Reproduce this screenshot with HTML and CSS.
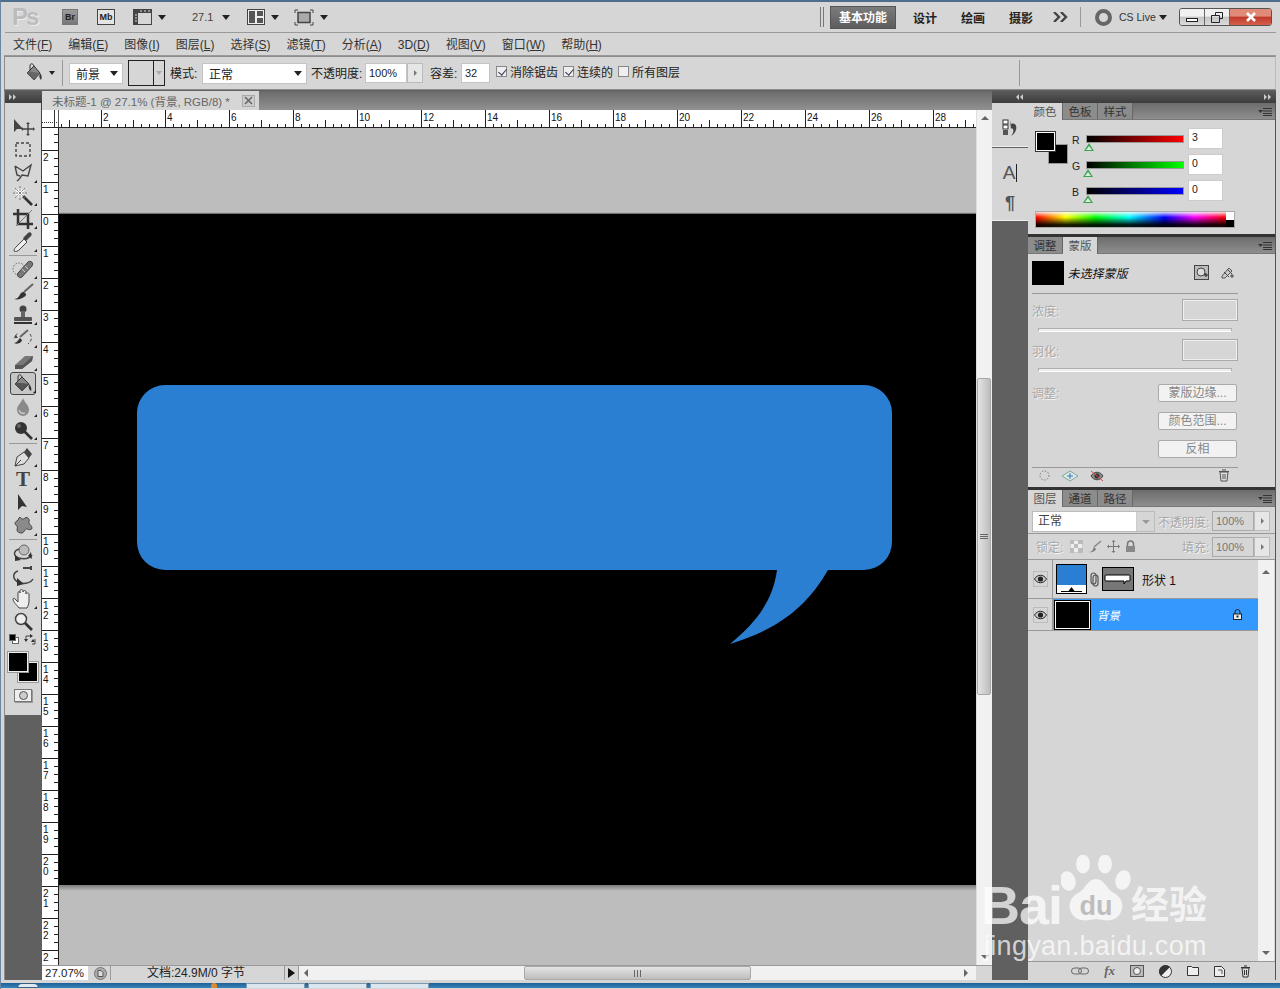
FILE: index.html
```html
<!DOCTYPE html>
<html>
<head>
    <meta charset="utf-8">
    <title>Adobe Photoshop CS5</title>
    <link rel="stylesheet" href="styles.css">
</head>
<body>
<div class="window">

    <!-- application bar -->
    <header class="appbar">
        <span class="ps-logo">Ps</span>
        <span class="br-btn">Br</span>
        <span class="mb-btn">Mb</span>
        <svg class="bar-ic film" width="19" height="16" viewBox="0 0 19 16"><rect x=".5" y=".5" width="18" height="15" fill="#d6d6d6" stroke="#444"/><rect x="1" y="1" width="17" height="3" fill="#444"/><rect x="1" y="1" width="4" height="14" fill="#444"/><path d="M2 6h2M2 9h2M2 12h2M7 2h2M11 2h2M15 2h2" stroke="#ddd"/></svg>
        <i class="caret film-caret"></i>
        <span class="zoom-val">27.1</span>
        <i class="caret zoom-caret"></i>
        <svg class="bar-ic layout" width="18" height="16" viewBox="0 0 18 16"><rect x=".5" y=".5" width="17" height="15" fill="#eee" stroke="#444"/><rect x="2" y="2" width="6" height="12" fill="#555"/><rect x="10" y="2" width="6" height="5" fill="#555"/><rect x="10" y="9" width="6" height="5" fill="#555"/></svg>
        <i class="caret layout-caret"></i>
        <svg class="bar-ic screen" width="20" height="17" viewBox="0 0 20 17"><path d="M1 4V1h3M16 1h3v3M19 13v3h-3M4 16H1v-3" fill="none" stroke="#444"/><rect x="4" y="3.5" width="12" height="10" fill="#aaa" stroke="#444" stroke-width="1.5"/></svg>
        <i class="caret screen-caret"></i>

        <span class="bar-grip"></span>
        <span class="ws-btn ws-active">基本功能</span>
        <span class="ws-btn">设计</span>
        <span class="ws-btn">绘画</span>
        <span class="ws-btn">摄影</span>
        <svg class="ws-more" width="15" height="10" viewBox="0 0 15 10"><path d="M1 0l5 5-5 5M8 0l5 5-5 5" fill="none" stroke="#444" stroke-width="2.4"/></svg>
        <span class="bar-sep"></span>
        <span class="cs-ring"></span>
        <span class="cs-live">CS Live</span>
        <i class="caret cs-caret"></i>
        <div class="win-btns">
            <span class="win-btn win-min"><i></i></span>
            <span class="win-btn win-max"><svg width="12" height="11" viewBox="0 0 12 11"><path d="M4.500 3V.5h7v6H8.500M.5 3.500h8v7h-8z" fill="none" stroke="#222"/></svg></span>
            <span class="win-btn win-close"><svg width="12" height="10" viewBox="0 0 12 10"><path d="M2 1l8 8M10 1l-8 8" stroke="#fff" stroke-width="2.600"/></svg></span>
        </div>
    </header>

    <!-- menu bar -->
    <nav class="menubar">
        <span>文件(<u>F</u>)</span>
        <span>编辑(<u>E</u>)</span>
        <span>图像(<u>I</u>)</span>
        <span>图层(<u>L</u>)</span>
        <span>选择(<u>S</u>)</span>
        <span>滤镜(<u>T</u>)</span>
        <span>分析(<u>A</u>)</span>
        <span>3D(<u>D</u>)</span>
        <span>视图(<u>V</u>)</span>
        <span>窗口(<u>W</u>)</span>
        <span>帮助(<u>H</u>)</span>
    </nav>

    <!-- options bar -->
    <div class="optbar">
        <span class="opt-grip"></span>
        <svg class="opt-tool" width="22" height="22" viewBox="0 0 22 22"><path d="M5 11l7-7 6 7-6 7z" fill="#888" stroke="#333"/><path d="M5 11c1-2 3-2 6-1l7 1-6 7z" fill="#666"/><path d="M12 4C11 1 8 1 8 4v4" fill="none" stroke="#333"/><path d="M18 11c2 2 2 5 1 7-2-2-2-4-1-7z" fill="#333"/></svg>
        <i class="caret opt-tool-caret"></i>
        <span class="opt-sep"></span>
        <span class="opt-select sel-source">前景<i class="caret"></i></span>
        <span class="pattern-box"><span class="pattern-swatch"></span><span class="pattern-arrow"><i class="caret"></i></span></span>
        <span class="opt-label lb-mode">模式:</span>
        <span class="opt-select sel-mode">正常<i class="caret"></i></span>
        <span class="opt-label lb-opacity">不透明度:</span>
        <span class="opt-input in-opacity">100%</span>
        <span class="opt-step"><i></i></span>
        <span class="opt-label lb-tol">容差:</span>
        <span class="opt-input in-tol">32</span>
        <label class="opt-check ck-anti"><i class="check on"></i>消除锯齿</label>
        <label class="opt-check ck-cont"><i class="check on"></i>连续的</label>
        <label class="opt-check ck-all"><i class="check"></i>所有图层</label>
        <span class="opt-sep opt-sep-end"></span>
    </div>

    <div class="main">

        <!-- tools -->
        <aside class="toolcol">
            <div class="strip"><svg width="8" height="6" viewBox="0 0 8 6"><path d="M0 0l3 3-3 3zM4 0l3 3-3 3z" fill="#ccc"/></svg></div>
            <div class="tools">
                <div class="grip"></div>
                <div class="tool"><svg viewBox="0 0 24 22"><path class="d" d="M3 3v13l3-3h6z"/><path class="s" d="M17 8v10M12 13h10"/><path class="d" d="M17 6l2 2h-4zM17 20l2-2h-4zM10 13l2-2v4zM24 13l-2-2v4z"/></svg></div>
                <div class="tool"><svg viewBox="0 0 24 22"><rect class="dash" x="5" y="4" width="14" height="13"/></svg></div>
                <div class="tool more"><svg viewBox="0 0 24 22"><path class="s" d="M4 4l8 5 8-6-3 11-6-1-2 3c-1 2-2 2-3 3M4 4l2 9 3 1"/></svg></div>
                <div class="tool more"><svg viewBox="0 0 24 22"><path class="thick" d="M12 11l9 9"/><circle cx="9" cy="8" r="4" fill="#fff"/><path d="M9 1v14M2 8h14M4 3l10 10M14 3L4 13" stroke="#777" stroke-dasharray="2 1"/></svg></div>
                <div class="tool more"><svg viewBox="0 0 24 22"><path d="M7 1v15h15M2 6h15v15" fill="none" stroke="#333" stroke-width="2.5"/><path d="M5 18L21 2" stroke="#777"/></svg></div>
                <div class="tool more"><svg viewBox="0 0 24 22"><path d="M3 20c0-2 1-3 2-4l8-8 3 3-8 8c-1 1-3 2-5 1z" fill="#eee" stroke="#444"/><path d="M12 7l5-5c2-2 5 1 3 3l-5 5z" fill="#444"/></svg></div>
                <div class="sep"></div>
                <div class="tool more"><svg viewBox="0 0 24 22"><circle cx="8" cy="11" r="6" fill="none" stroke="#666" stroke-dasharray="1.5 1.5"/><path d="M7 15L17 4c3-2 6 1 4 4L11 19c-2 2-6-1-4-4z" fill="#777" stroke="#444"/><path d="M11 11l3 3M14 8l3 3" stroke="#ccc"/></svg></div>
                <div class="tool more"><svg viewBox="0 0 24 22"><path d="M22 3L13 11" stroke="#666" stroke-width="2"/><path d="M3 18c4 0 5-3 7-6 1-1 2-1 3-1l2 2c0 1 0 2-2 3-3 2-6 3-10 2z" fill="#333"/></svg></div>
                <div class="tool more"><svg viewBox="0 0 24 22"><circle cx="12" cy="5" r="3.5" fill="#444"/><rect x="10" y="7" width="4" height="7" fill="#666"/><rect x="3" y="13" width="18" height="4" rx="1" fill="#555"/><rect x="3" y="18" width="18" height="2" fill="#333"/></svg></div>
                <div class="tool more"><svg viewBox="0 0 24 22"><path d="M17 3L9 10" stroke="#666" stroke-width="2"/><path d="M3 16c3 0 4-3 6-5l2 2c0 2-4 5-8 3z" fill="#333"/><path d="M3 12c0-3 2-5 4-6M4 11l1-3 2 3z" fill="#444"/><path class="dash thin" d="M19 7c2 3 2 7-2 10"/></svg></div>
                <div class="tool more"><svg viewBox="0 0 24 22"><path d="M4 15L14 6h8l-1 5-10 8H4z" fill="#777"/><path d="M4 15h8l10-9-1 5-10 8H4z" fill="#555"/></svg></div>
                <div class="tool tool-on more"><svg viewBox="0 0 24 22"><path d="M4 11l7-7 7 7-7 7z" fill="#888" stroke="#333"/><path d="M4 11c2-2 4-1 7-1l7 1-7 7z" fill="#555"/><path d="M11 4c-1-3-4-3-4 0v4" fill="none" stroke="#333"/><path d="M18 11c2 2 3 5 2 7-2-1-3-4-2-7z" fill="#333"/></svg></div>
                <div class="tool more"><svg viewBox="0 0 24 22"><path d="M12 2c1 4 6 7 6 12a6 6 0 0 1-12 0c0-5 5-8 6-12z" fill="#8a8a8a"/><path d="M8 14c1 3 3 4 6 3" fill="none" stroke="#c4c4c4" stroke-width="1.5"/></svg></div>
                <div class="tool more"><svg viewBox="0 0 24 22"><path class="thick" d="M13 12l8 8"/><circle cx="10" cy="9" r="6" fill="#333"/><circle cx="8" cy="7" r="2" fill="#666"/></svg></div>
                <div class="sep"></div>
                <div class="tool more"><svg viewBox="0 0 24 22"><path d="M4 20l2-9 7-5 5 6-5 6z" fill="#ddd" stroke="#444"/><path d="M4 20l6-6" stroke="#444"/><path d="M13 6l3-4 5 6-3 4z" fill="#444"/></svg></div>
                <div class="tool more"><span class="type-tool">T</span></div>
                <div class="tool more"><svg viewBox="0 0 24 22"><path d="M7 2v16l4-4 5 1z" fill="#333"/></svg></div>
                <div class="tool more"><svg viewBox="0 0 24 22"><path d="M9 2c2 2 3 3 5 1 3-2 5 2 4 4-1 1 3 4 3 6s-3 2-5 1c-2-1-2 3-5 4-3 0-5-1-5-3 0-1 1-3 0-4-2-1-3-4 0-5 2-1 1-3 3-4z" fill="#8a8a8a" stroke="#444"/></svg></div>
                <div class="sep"></div>
                <div class="tool"><svg viewBox="0 0 24 22"><circle cx="13" cy="8" r="5" fill="#bbb" stroke="#666"/><path d="M8 7C2 9 2 14 8 16c4 1 10 1 13-3" fill="none" stroke="#444" stroke-width="1.5"/><path d="M21 17l-1-7-3 4z" fill="#333"/><path d="M4 13l6 5-6 1z" fill="#333"/></svg></div>
                <div class="tool"><svg viewBox="0 0 24 22"><path d="M7 6C1 8 1 15 9 18c5 1 11 0 13-4" fill="none" stroke="#444" stroke-width="1.5"/><path d="M6 13l7 6-7 2z" fill="#333"/><path d="M12 3h8M20 1v4" stroke="#444" stroke-width="2"/></svg></div>
                <div class="tool more"><svg viewBox="0 0 24 22"><path d="M8 20c-2-3-6-6-6-9 0-1 2-1 3 1l2 2V5c0-2 2-2 2 0V3c0-2 3-2 3 0v1c0-2 3-2 3 0v2c0-2 3-1 3 0v7c0 3-1 5-2 7z" fill="#eee" stroke="#444"/></svg></div>
                <div class="tool"><svg viewBox="0 0 24 22"><circle cx="10" cy="8" r="5.5" fill="#eee" stroke="#444" stroke-width="1.5"/><path class="thick" d="M14 12l7 7"/></svg></div>
                <div class="mini-colors">
                    <svg width="10" height="10" viewBox="0 0 10 10"><rect x="3.5" y="3.5" width="6" height="6" fill="#fff" stroke="#666"/><rect x=".5" y=".5" width="6" height="6" fill="#000" stroke="#666"/></svg>
                    <svg width="12" height="11" viewBox="0 0 12 11"><path d="M2 5V2h6M8 10h3V5" fill="none" stroke="#444"/><path d="M0 5h4L2 8zM6 0v4L9 2zM9 5l2 3H7z" fill="#333"/></svg>
                </div>
                <div class="swatches">
                    <span class="sw sw-bg"></span>
                    <span class="sw sw-fg"></span>
                </div>
                <div class="quickmask"><i></i></div>
            </div>
        </aside>

        <!-- document -->
        <section class="doccol">
            <div class="tabrow">
                <div class="doctab">未标题-1 @ 27.1% (背景, RGB/8) *<span class="tab-x"><svg width="9" height="9" viewBox="0 0 9 9"><path d="M1 1l7 7M8 1L1 8" stroke="#666" stroke-width="1.5"/></svg></span></div>
            </div>
            <div class="docbody">
                <div class="docview">
                    <div class="hruler">
                        <div class="ruler-corner"></div>
                        <div class="hticks">
                            <span class="first"></span><span>2</span><span>4</span><span>6</span><span>8</span><span>10</span><span>12</span><span>14</span><span>16</span><span>18</span><span>20</span><span>22</span><span>24</span><span>26</span><span>28</span>
                        </div>
                    </div>
                    <div class="viewrow">
                        <div class="vticks">
                            <span class="first"></span><span>2</span><span>1</span><span>0</span><span>1</span><span>2</span><span>3</span><span>4</span><span>5</span><span>6</span><span>7</span><span>8</span><span>9</span><span>1<br>0</span><span>1<br>1</span><span>1<br>2</span><span>1<br>3</span><span>1<br>4</span><span>1<br>5</span><span>1<br>6</span><span>1<br>7</span><span>1<br>8</span><span>1<br>9</span><span>2<br>0</span><span>2<br>1</span><span>2<br>2</span><span>2</span>
                        </div>
                        <div class="canvas">
                            <div class="paste-top"></div>
                            <div class="art">
                                <svg class="bubble" width="756" height="259" viewBox="0 0 756 259"><path fill="#2a7fd2" d="M28 0H727A28 28 0 0 1 755 28V157A28 28 0 0 1 727 185H691C670 222 640 245 593 259C620 237 636 215 640 185H28A28 28 0 0 1 0 157V28A28 28 0 0 1 28 0Z"/></svg>
                            </div>
                            <div class="paste-bottom"></div>
                        </div>
                    </div>
                </div>
                <div class="vscroll">
                    <i class="arrow-up"></i>
                    <div class="vthumb-wrap"><div class="vthumb"><b></b></div></div>
                    <i class="arrow-down"></i>
                </div>
            </div>
            <div class="statusbar">
                <span class="st-zoom">27.07%</span>
                <span class="st-icon"><svg width="13" height="13" viewBox="0 0 13 13"><circle cx="6.5" cy="6.5" r="6" fill="#aaa" stroke="#777"/><path d="M4 3.500h3l2 2v4H4z" fill="#ddd" stroke="#555"/></svg></span>
                <span class="st-info">文档:24.9M/0 字节</span>
                <span class="st-play"><i></i></span>
                <div class="hscroll">
                    <i class="arrow-left"></i>
                    <div class="hthumb"><b></b></div>
                    <i class="arrow-right"></i>
                </div>
                <span class="st-end"></span>
            </div>
        </section>

        <!-- right side -->
        <div class="rightcol">
            <div class="strip strip-right">
                <svg width="8" height="6" viewBox="0 0 8 6"><path d="M3 0L0 3l3 3zM7 0L4 3l3 3z" fill="#ccc"/></svg>
                <svg width="8" height="6" viewBox="0 0 8 6"><path d="M0 0l3 3-3 3zM4 0l3 3-3 3z" fill="#ccc"/></svg>
            </div>
            <div class="rightbody">
                <div class="dock">
                    <div class="dock-box dock-hist">
                        <div class="grip grip-small"></div>
                        <svg width="16" height="18" viewBox="0 0 16 18"><rect x="1" y="1" width="5" height="4" fill="#fff" stroke="#333"/><rect x="1" y="6" width="5" height="4" fill="#fff" stroke="#333"/><rect x="1" y="11" width="5" height="5" fill="#555"/><path d="M8 1l1 4c5-2 6 3 5 6s-3 5-5 6c2-2 3-5 2-7-1-1-2-1-2 0z" fill="#444"/></svg>
                    </div>
                    <div class="dock-box dock-char">
                        <div class="grip grip-small"></div>
                        <span class="dock-a">A</span>
                        <span class="dock-p">¶</span>
                    </div>
                </div>

                <div class="panels">
                    <!-- color -->
                    <div class="panel panel-color">
                        <div class="tabs">
                            <span class="tab active">颜色</span><span class="tab">色板</span><span class="tab">样式</span>
                            <svg class="panel-menu" width="14" height="8" viewBox="0 0 14 8"><path d="M0 2h5L2.500 5z" fill="#333"/><path d="M5 .5h9M5 3h9M5 5.500h9M5 7.500h9" stroke="#333"/></svg>
                        </div>
                        <div class="color-body">
                            <span class="cs cs-bg"></span>
                            <span class="cs cs-fg"></span>
                            <div class="color-rows">
                                <span class="ch-label">R</span>
                                <span class="track track-r"><i class="thumb thumb-r"></i></span>
                                <span class="value">3</span>
                                <span class="ch-label">G</span>
                                <span class="track track-g"><i class="thumb"></i></span>
                                <span class="value">0</span>
                                <span class="ch-label">B</span>
                                <span class="track track-b"><i class="thumb"></i></span>
                                <span class="value">0</span>
                            </div>
                            <div class="spectrum"><span class="spec-end"></span></div>
                        </div>
                    </div>
                    <div class="panel-gap"></div>

                    <!-- masks -->
                    <div class="panel panel-mask">
                        <div class="tabs">
                            <span class="tab">调整</span><span class="tab active">蒙版</span>
                            <svg class="panel-menu" width="14" height="8" viewBox="0 0 14 8"><path d="M0 2h5L2.500 5z" fill="#333"/><path d="M5 .5h9M5 3h9M5 5.500h9M5 7.500h9" stroke="#333"/></svg>
                        </div>
                        <div class="mask-body">
                            <div class="mask-head">
                                <span class="mask-thumb"></span>
                                <em class="mask-name">未选择蒙版</em>
                                <svg class="mask-ic1" width="15" height="15" viewBox="0 0 15 15"><rect x=".5" y=".5" width="14" height="14" fill="#bbb" stroke="#444"/><circle cx="7" cy="7" r="4" fill="#ddd" stroke="#444"/><path d="M10 10h4M12 8v4" stroke="#222"/></svg>
                                <svg class="mask-ic2" width="15" height="15" viewBox="0 0 15 15"><path d="M2 11L9 3l3 3-7 7H2z" fill="#ccc" stroke="#555"/><path d="M4 7l5 5M7 4l5 5M10 11h4M12 9v4" stroke="#444"/></svg>
                            </div>
                            <div class="mask-row">
                                <span class="dim">浓度:</span>
                                <span class="dim-input"></span>
                            </div>
                            <div class="dim-track"></div>
                            <div class="mask-row">
                                <span class="dim">羽化:</span>
                                <span class="dim-input"></span>
                            </div>
                            <div class="dim-track"></div>
                            <div class="mask-actions">
                                <span class="dim dim-adjust">调整:</span>
                                <div class="mask-btns">
                                    <span class="mask-btn">蒙版边缘...</span>
                                    <span class="mask-btn">颜色范围...</span>
                                    <span class="mask-btn">反相</span>
                                </div>
                            </div>
                            <div class="mask-foot">
                                <svg class="mf1" width="11" height="11" viewBox="0 0 11 11"><circle cx="5.5" cy="5.5" r="4.5" fill="none" stroke="#777" stroke-dasharray="1.5 1.5"/></svg>
                                <svg class="mf2" width="18" height="12" viewBox="0 0 18 12"><path d="M9 1l8 5-8 5-8-5z" fill="#dfe8e4" stroke="#7ea79a"/><path d="M9 3v6M6 6h6" stroke="#2b78b0"/></svg>
                                <svg class="mf3" width="14" height="12" viewBox="0 0 14 12"><path d="M1 6c3-5 9-5 12 0-3 5-9 5-12 0z" fill="#888" stroke="#444"/><circle cx="7" cy="6" r="2.500" fill="#333"/><path d="M1 1l12 10" stroke="#d84444"/></svg>
                                <svg class="mf4" width="12" height="13" viewBox="0 0 12 13"><path d="M2 3h8l-1 9H3z" fill="#ddd" stroke="#555"/><path d="M1 2.500h10M4 1h4M5 5v5M7 5v5" stroke="#555"/></svg>
                            </div>
                        </div>
                    </div>
                    <div class="panel-gap"></div>

                    <!-- layers -->
                    <div class="panel panel-layers">
                        <div class="tabs">
                            <span class="tab active">图层</span><span class="tab">通道</span><span class="tab">路径</span>
                            <svg class="panel-menu" width="14" height="8" viewBox="0 0 14 8"><path d="M0 2h5L2.500 5z" fill="#333"/><path d="M5 .5h9M5 3h9M5 5.500h9M5 7.500h9" stroke="#333"/></svg>
                        </div>
                        <div class="layer-top">
                            <span class="blend">正常<span class="blend-arrow"></span></span>
                            <span class="dim lb-op">不透明度:</span>
                            <span class="dim-val">100%</span><span class="dim-step"><i></i></span>
                        </div>
                        <div class="layer-lock">
                            <span class="dim lb-lock">锁定:</span>
                            <svg width="13" height="13" viewBox="0 0 13 13"><rect width="13" height="13" fill="#eee" stroke="#aaa"/><path d="M0 0h4v4H0zM8 0h5v4H8zM4 4h4v4H4zM0 8h4v5H0zM8 8h5v5H8z" fill="#bbb"/></svg>
                            <svg width="14" height="13" viewBox="0 0 14 13"><path d="M13 1L6 7" stroke="#888" stroke-width="1.5"/><path d="M1 12c3 0 4-2 5-5l2 2c-1 2-4 4-7 3z" fill="#777"/></svg>
                            <svg width="13" height="13" viewBox="0 0 13 13"><path d="M6.500 1v11M1 6.500h11" stroke="#777"/><path d="M6.500 0l2 2h-4zM6.500 13l2-2h-4zM0 6.500l2-2v4zM13 6.500l-2-2v4z" fill="#777"/></svg>
                            <svg width="11" height="13" viewBox="0 0 11 13"><path d="M2.500 6V4a3 3 0 0 1 6 0v2" fill="none" stroke="#777" stroke-width="1.5"/><rect x="1" y="6" width="9" height="6" fill="#888"/></svg>
                            <span class="dim lb-fill">填充:</span>
                            <span class="dim-val">100%</span><span class="dim-step"><i></i></span>
                        </div>
                        <div class="layer-area">
                            <div class="layer-list">
                                <div class="layer layer-shape">
                                    <span class="eye-cell"><svg width="14" height="10" viewBox="0 0 13 9"><path d="M.5 4.500c3-5 9-5 12 0-3 5-9 5-12 0z" fill="#ccc" stroke="#222"/><circle cx="6.500" cy="4.500" r="2.600" fill="#222"/></svg></span>
                                    <span class="thumb-fill"><span class="thumb-blue"></span><svg width="29" height="8" viewBox="0 0 29 8"><path d="M4 6.500h21" stroke="#000"/><path d="M14.500 2l3 4h-6z" fill="#000"/></svg></span>
                                    <svg class="link-ic" width="9" height="15" viewBox="0 0 9 15"><rect x="1" y="1" width="5" height="11" rx="2.500" fill="none" stroke="#555" stroke-width="1.2"/><rect x="3" y="3" width="5" height="11" rx="2.500" fill="none" stroke="#555" stroke-width="1.2"/></svg>
                                    <span class="thumb-mask"><svg width="30" height="22" viewBox="0 0 30 22"><path d="M3 7h23q1 0 1 1v4q0 1-1 1h-3l-2 3 0-3H3q-1 0-1-1V8q0-1 1-1z" fill="#fff" stroke="#000"/></svg></span>
                                    <span class="layer-name">形状 1</span>
                                </div>
                                <div class="layer layer-bg">
                                    <span class="eye-cell"><svg width="14" height="10" viewBox="0 0 13 9"><path d="M.5 4.500c3-5 9-5 12 0-3 5-9 5-12 0z" fill="#ccc" stroke="#222"/><circle cx="6.500" cy="4.500" r="2.600" fill="#222"/></svg></span>
                                    <div class="layer-sel">
                                        <span class="thumb-black"></span>
                                        <em class="layer-name-bg">背景</em>
                                        <svg class="layer-lock-ic" width="9" height="11" viewBox="0 0 9 11"><path d="M2 5V3a2.500 2.500 0 0 1 5 0v2" fill="none" stroke="#222"/><rect x=".5" y="5" width="8" height="5.500" fill="#eee" stroke="#222"/><rect x="3.500" y="6.500" width="2" height="2" fill="#222"/></svg>
                                    </div>
                                </div>
                            </div>
                            <div class="layer-scroll">
                                <i class="arrow-up"></i>
                                <i class="arrow-down"></i>
                            </div>
                        </div>
                        <div class="layer-foot">
                            <svg width="18" height="8" viewBox="0 0 18 8"><rect x=".5" y="1" width="10" height="6" rx="3" fill="none" stroke="#666"/><rect x="7.500" y="1" width="10" height="6" rx="3" fill="none" stroke="#666"/></svg>
                            <span class="fx">fx</span>
                            <svg width="14" height="12" viewBox="0 0 14 12"><rect x=".5" y=".5" width="13" height="11" fill="#bbb" stroke="#555"/><circle cx="7" cy="6" r="3.500" fill="#eee" stroke="#555"/></svg>
                            <svg width="13" height="13" viewBox="0 0 13 13"><circle cx="6.500" cy="6.500" r="6" fill="#eee" stroke="#333"/><path d="M11 2L2 11a6 6 0 0 1 9-9z" fill="#333"/></svg>
                            <svg width="12" height="10" viewBox="0 0 12 10"><path d="M.5 9.500v-9h4l1 1h6v8z" fill="#eee" stroke="#333"/></svg>
                            <svg width="11" height="11" viewBox="0 0 11 11"><path d="M.5.500h7l3 3v7H.500z" fill="#eee" stroke="#333"/><path d="M4 4h4v4" fill="none" stroke="#555"/></svg>
                            <svg width="11" height="13" viewBox="0 0 11 13"><path d="M2 3h7l-1 9H3z" fill="#ddd" stroke="#333"/><path d="M1 2.500h9M4 1h3M4.500 5v5M6.500 5v5" stroke="#333"/></svg>
                        </div>
                    </div>
                </div>
            </div>
        </div>
    </div>

    <!-- desktop taskbar under the window -->
    <footer class="taskbar">
        <span class="orb"></span>
        <span class="dot-orange"></span>
        <span class="task-btn task-1"></span>
        <span class="task-btn"></span>
        <span class="task-btn"></span>
    </footer>

    <!-- baidu watermark burned into the picture -->
    <div class="watermark">
        <div class="wm-top">
            <span class="wm-bai">Bai</span>
            <svg class="wm-paw" width="72" height="74" viewBox="0 0 72 74">
                <ellipse cx="7" cy="26" rx="7.500" ry="10" fill="#fff" fill-opacity=".72" transform="rotate(-15 7 26)"/>
                <ellipse cx="22" cy="9" rx="7" ry="9.500" fill="#fff" fill-opacity=".72"/>
                <ellipse cx="44" cy="9" rx="7" ry="9.500" fill="#fff" fill-opacity=".72"/>
                <ellipse cx="62" cy="25" rx="7.500" ry="10" fill="#fff" fill-opacity=".72" transform="rotate(15 62 25)"/>
                <path d="M35 24c9 0 10 10 18 14 9 5 11 15 5 22-6 8-16 5-23 4-7 1-17 4-23-4-6-7-4-17 5-22 8-4 9-14 18-14z" fill="#fff" fill-opacity=".72"/>
                <text x="35" y="60" text-anchor="middle" class="wm-du">du</text>
            </svg>
            <span class="wm-cn">经验</span>
        </div>
        <div class="wm-url">jingyan.baidu.com</div>
    </div>
</div>
</body>
</html>
```

FILE: styles.css
```css
* {
    box-sizing: border-box;
}

html, body {
    margin: 0;
    padding: 0;
}

body {
    width: 1280px;
    height: 989px;
    overflow: hidden;
    background-color: #d6d6d6;
    font-family: "Liberation Sans", "Noto Sans CJK SC", sans-serif;
    font-size: 12px;
    color: #222;
}

i, em {
    font-style: normal;
}

.window {
    position: relative;
    width: 1280px;
    height: 989px;
    border-top: 2px solid #4f6d8c;
    border-left: 1px solid #6a86a3;
    padding: 0 4px 0 3px;
    display: flex;
    flex-direction: column;
}

/* small triangles used all over the ui */
.caret {
    display: inline-block;
    width: 0;
    height: 0;
    border-left: 4px solid transparent;
    border-right: 4px solid transparent;
    border-top: 5px solid #222;
}

/* ---- application bar ---- */
.appbar {
    height: 31px;
    flex: none;
    display: flex;
    align-items: center;
    border-bottom: 1px solid #999;
    margin-left: 1px;
}

.ps-logo {
    margin-left: 7px;
    width: 25px;
    font-size: 24px;
    font-weight: bold;
    color: #bcbcbc;
    text-shadow: 1px 1px 0 #eee;
    letter-spacing: -2px;
}

.br-btn, .mb-btn {
    height: 16px;
    font-size: 9px;
    font-weight: bold;
    display: flex;
    align-items: center;
    justify-content: center;
    color: #222;
}

.br-btn {
    margin-left: 25px;
    width: 16px;
    background: linear-gradient(#9c9c9c, #777);
    border: 1px solid #777;
}

.mb-btn {
    margin-left: 19px;
    width: 18px;
    background: #e4e4e4;
    border: 1px solid #444;
}

.film { margin-left: 18px; }
.film-caret { margin-left: 6px; }
.zoom-val { margin-left: 26px; width: 22px; font-size: 11px; color: #444; }
.zoom-caret { margin-left: 8px; }
.layout { margin-left: 17px; }
.layout-caret { margin-left: 6px; }
.screen { margin-left: 15px; }
.screen-caret { margin-left: 6px; }

.bar-grip {
    margin-left: 492px;
    width: 4px;
    height: 20px;
    border-left: 1px solid #777;
    border-right: 1px solid #777;
}

.ws-btn {
    width: 48px;
    text-align: center;
    font-size: 12px;
    font-weight: bold;
    color: #222;
}

.ws-active {
    margin-left: 6px;
    margin-right: 5px;
    width: 66px;
    height: 23px;
    line-height: 22px;
    background: linear-gradient(#7c7c7c, #5c5c5c);
    color: #fff;
    border: 1px solid #555;
}

.ws-more { margin-left: 8px; }

.bar-sep {
    margin-left: 12px;
    width: 1px;
    height: 20px;
    background-color: #999;
}

.cs-ring {
    margin-left: 14px;
    width: 17px;
    height: 17px;
    border: 4px solid #666;
    border-radius: 50%;
}

.cs-live {
    margin-left: 7px;
    width: 38px;
    font-size: 10.5px;
    color: #333;
    white-space: nowrap;
}

.cs-caret { margin-left: 2px; }

.win-btns {
    margin-left: 12px;
    height: 18px;
    width: 93px;
    display: flex;
    border: 1px solid #555;
    border-radius: 3px;
    overflow: hidden;
}

.win-btn {
    display: flex;
    align-items: center;
    justify-content: center;
    background: linear-gradient(#f0f0f0 45%, #c4c4c4 50%, #dcdcdc);
}

.win-min { width: 25px; border-right: 1px solid #666; }
.win-min i { width: 12px; height: 4px; border: 1px solid #222; background: #fff; margin-top: 5px; }
.win-max { width: 25px; border-right: 1px solid #666; }
.win-close { flex: 1; background: linear-gradient(#e08a78 45%, #c0392a 50%, #d5604a); }

/* ---- menu bar ---- */
.menubar {
    height: 23px;
    flex: none;
    display: flex;
    align-items: center;
    gap: 16px;
    padding: 2px 0 0 9px;
    color: #333;
    font-size: 12px;
    border-bottom: 1px solid #999;
}

.menubar span {
    line-height: 20px;
    height: 20px;
}

/* ---- options bar ---- */
.optbar {
    height: 34px;
    flex: none;
    display: flex;
    align-items: center;
    border: 1px solid #8c8c8c;
    border-right-color: #bbb;
    color: #222;
}

.opt-grip {
    margin-left: 4px;
    width: 4px;
    height: 24px;
    background-image: radial-gradient(#888 40%, transparent 50%);
    background-size: 2px 2px;
}

.opt-tool { margin-left: 9px; }
.opt-tool-caret { margin-left: 5px; border-left-width: 3px; border-right-width: 3px; border-top-width: 4px; }

.opt-sep {
    margin-left: 7px;
    width: 1px;
    height: 26px;
    background-color: #999;
}

.opt-select {
    height: 21px;
    background-color: #fff;
    border: 1px solid #c4c4c4;
    display: flex;
    align-items: center;
    justify-content: space-between;
    padding: 0 4px 0 6px;
    font-size: 12px;
    flex: none;
}

.sel-source { margin-left: 6px; width: 54px; }
.sel-mode { margin-left: 4px; width: 105px; }

.pattern-box {
    margin-left: 5px;
    width: 37px;
    height: 26px;
    display: flex;
    border: 1px solid #222;
    background: #d6d6d6;
}

.pattern-swatch { flex: 1; border-right: 1px solid #222; }

.pattern-arrow {
    width: 10px;
    display: flex;
    align-items: center;
    justify-content: center;
}

.pattern-arrow .caret { border-top-color: #aaa; border-left-width: 3px; border-right-width: 3px; border-top-width: 4px; }

.opt-label { flex: none; margin-bottom: 2px; }
.lb-mode { margin-left: 5px; width: 28px; }
.lb-opacity { margin-left: 4px; width: 54px; }
.lb-tol { margin-left: 7px; width: 31px; }

.opt-input {
    height: 20px;
    background-color: #fff;
    border: 1px solid #c4c4c4;
    padding-left: 3px;
    line-height: 18px;
    font-size: 11px;
}

.in-opacity { width: 42px; }
.in-tol { width: 29px; }

.opt-step {
    width: 16px;
    height: 20px;
    background: #e6e6e6;
    border: 1px solid #bbb;
    display: flex;
    align-items: center;
    justify-content: center;
}

.opt-step i, .dim-step i {
    border-left: 3px solid #777;
    border-top: 3px solid transparent;
    border-bottom: 3px solid transparent;
}

.opt-check {
    display: flex;
    align-items: center;
    gap: 3px;
    flex: none;
    height: 20px;
    margin-bottom: 3px;
}

.ck-anti { margin-left: 6px; }
.ck-cont, .ck-all { margin-left: 5px; }

.check {
    width: 11px;
    height: 11px;
    background: #eee;
    border: 1px solid #888;
    position: relative;
}

.check.on::after {
    content: "";
    position: absolute;
    left: 3px;
    top: 0;
    width: 4px;
    height: 7px;
    border: solid #335;
    border-width: 0 1.5px 1.5px 0;
    transform: rotate(40deg);
}

.opt-sep-end { margin-left: 339px; }

/* ---- main area ---- */
.main {
    height: 890px;
    flex: none;
    display: flex;
    background-color: #606060;
    padding-top: 1px;
}

.strip {
    height: 12px;
    background: linear-gradient(#5a5a5a, #3c3c3c);
    display: flex;
    align-items: center;
    padding-left: 4px;
}

.toolcol {
    width: 38px;
    flex: none;
    border-left: 1px solid #8c8c8c;
}

.tools {
    height: 612px;
    background-color: #d6d6d6;
    border-right: 1px solid #444;
    position: relative;
}

.grip {
    height: 12px;
    margin: 0 5px;
    background-image: radial-gradient(#888 40%, transparent 50%);
    background-size: 2px 2px;
    background-repeat: repeat-x;
    background-position: 0 3px;
}

.tool {
    height: 23px;
    display: flex;
    align-items: center;
    justify-content: center;
    position: relative;
    margin: 0 5px;
}

.tool svg {
    width: 24px;
    height: 22px;
}

.tool.more::after {
    content: "";
    position: absolute;
    right: -1px;
    bottom: 1px;
    border-left: 3px solid transparent;
    border-bottom: 3px solid #222;
}

.tool-on {
    border: 1px solid #444;
    border-radius: 3px;
    background: #c6c6c6;
}

.d { fill: #444; }
.s { fill: none; stroke: #444; stroke-width: 1.4; }
.thick { fill: none; stroke: #333; stroke-width: 2.6; }
.dash { fill: none; stroke: #444; stroke-width: 1.4; stroke-dasharray: 3 2; }
.dash.thin { stroke-width: 1; }

.type-tool {
    font-family: "Liberation Serif", serif;
    font-size: 21px;
    font-weight: bold;
    color: #444;
    line-height: 1;
}

.sep {
    height: 1px;
    margin: 2px 4px 1px;
    background-color: #999;
}

.mini-colors {
    height: 15px;
    margin-top: 1px;
    display: flex;
    align-items: flex-start;
    justify-content: space-between;
    padding: 0 5px 0 4px;
}

.swatches {
    position: relative;
    height: 33px;
    margin-top: 3px;
}

.sw {
    position: absolute;
    width: 20px;
    height: 20px;
    background-color: #000;
    border: 1px solid #eee;
    outline: 1px solid #999;
}

.sw-fg { left: 3px; top: 0; }
.sw-bg { left: 13px; top: 10px; }

.quickmask {
    margin: 4px 0 0 9px;
    width: 18px;
    height: 13px;
    background: #eee;
    border: 1px solid #777;
    box-shadow: 1px 1px 0 #999;
    display: flex;
    align-items: center;
    justify-content: center;
}

.quickmask i {
    width: 9px;
    height: 9px;
    border-radius: 50%;
    background: #ccc;
    border: 1px solid #555;
}

/* ---- document column ---- */
.doccol {
    width: 950px;
    flex: none;
    display: flex;
    flex-direction: column;
}

.tabrow {
    height: 19px;
    background: linear-gradient(#6a6a6a, #919191);
    flex: none;
}

.doctab {
    width: 217px;
    height: 19px;
    background-color: #d6d6d6;
    color: #666;
    font-size: 11.5px;
    padding-left: 10px;
    display: flex;
    align-items: center;
    white-space: nowrap;
}

.tab-x {
    margin-left: 12px;
    width: 13px;
    height: 12px;
    border: 1px solid #aaa;
    background: #ccc;
    display: flex;
    align-items: center;
    justify-content: center;
}

.docbody {
    flex: 1;
    display: flex;
    min-height: 0;
}

.docview {
    width: 934px;
    flex: none;
    display: flex;
    flex-direction: column;
}

.hruler {
    height: 18px;
    flex: none;
    display: flex;
    background: #fff;
    border-bottom: 1px solid #222;
}

.ruler-corner {
    width: 17px;
    border-right: 1px solid #555;
    background-image: linear-gradient(90deg, #333 1px, transparent 1px), linear-gradient(90deg, #333 1px, transparent 1px);
    background-size: 1px 2px, 2px 1px;
    background-position: 12px 0, 0 12px;
    background-repeat: repeat-y, repeat-x;
}

.hticks {
    flex: 1;
    display: flex;
    overflow: hidden;
    background-color: #fff;
    background-image: linear-gradient(90deg, #222 1px, transparent 1px), linear-gradient(90deg, #222 1px, transparent 1px);
    background-size: 8px 3px, 32px 7px;
    background-position: 2px 100%, 10px 100%;
    background-repeat: repeat-x;
}

.hticks span {
    width: 64px;
    flex: none;
    border-left: 1px solid #222;
    padding: 2px 0 0 1px;
    font-size: 10px;
    line-height: 11px;
    color: #111;
}

.hticks .first {
    width: 42px;
    border-left: none;
}

.viewrow {
    flex: 1;
    display: flex;
    min-height: 0;
}

.vticks {
    width: 17px;
    flex: none;
    background-color: #fff;
    border-right: 1px solid #222;
    overflow: hidden;
    background-image: linear-gradient(#222 1px, transparent 1px);
    background-size: 4px 8px;
    background-position: 100% 6px;
    background-repeat: repeat-y;
}

.vticks span {
    display: block;
    height: 32px;
    border-top: 1px solid #222;
    padding: 2px 0 0 1px;
    font-size: 10px;
    line-height: 10px;
    color: #111;
}

.vticks .first {
    height: 22px;
    border-top: none;
}

.canvas {
    flex: 1;
    display: flex;
    flex-direction: column;
    background-color: #bdbdbd;
    min-width: 0;
}

.paste-top { height: 86px; flex: none; }

.paste-bottom {
    flex: 1;
    background: linear-gradient(#7c7c7c, #bdbdbd 6px);
}

.art {
    height: 671px;
    flex: none;
    background-color: #000;
    box-shadow: 0 -1px 1px rgba(0, 0, 0, .4);
    padding: 171px 0 0 78px;
}

.bubble {
    display: block;
}

/* scrollbars */
.vscroll {
    width: 16px;
    flex: none;
    background-color: #f1f1f1;
    border-left: 1px solid #ddd;
    display: flex;
    flex-direction: column;
    align-items: center;
}

.arrow-up {
    margin-top: 6px;
    border-left: 4px solid transparent;
    border-right: 4px solid transparent;
    border-bottom: 4px solid #666;
}

.arrow-down {
    margin-bottom: 6px;
    border-left: 4px solid transparent;
    border-right: 4px solid transparent;
    border-top: 4px solid #666;
}

.vthumb-wrap {
    flex: 1;
    padding-top: 258px;
    width: 100%;
}

.vthumb {
    height: 317px;
    width: 14px;
    background: linear-gradient(90deg, #e4e4e4, #bdbdbd);
    border: 1px solid #a8a8a8;
    border-radius: 2px;
    display: flex;
    align-items: center;
    justify-content: center;
}

.vthumb b {
    width: 8px;
    height: 5px;
    border-top: 1px solid #666;
    border-bottom: 1px solid #666;
    background: linear-gradient(#666, #666) 0 50% / 100% 1px no-repeat;
}

.statusbar {
    height: 15px;
    flex: none;
    display: flex;
    background-color: #d6d6d6;
    border-top: 1px solid #999;
    font-size: 12px;
}

.st-zoom {
    width: 46px;
    background: #fff;
    padding-left: 3px;
    line-height: 14px;
    color: #222;
    font-size: 11.5px;
}

.st-icon {
    width: 23px;
    border-right: 1px solid #999;
    display: flex;
    align-items: center;
    padding-left: 6px;
}

.st-info {
    width: 173px;
    padding-left: 36px;
    line-height: 14px;
    color: #222;
    white-space: nowrap;
}

.st-play {
    width: 15px;
    border-left: 1px solid #999;
    border-right: 1px solid #999;
    display: flex;
    align-items: center;
    justify-content: center;
}

.st-play i {
    border-left: 7px solid #111;
    border-top: 5px solid transparent;
    border-bottom: 5px solid transparent;
}

.hscroll {
    width: 677px;
    display: flex;
    align-items: center;
    background: #f1f1f1;
}

.arrow-left {
    margin-left: 5px;
    border-right: 4px solid #666;
    border-top: 4px solid transparent;
    border-bottom: 4px solid transparent;
}

.arrow-right {
    margin-left: 213px;
    border-left: 4px solid #666;
    border-top: 4px solid transparent;
    border-bottom: 4px solid transparent;
}

.hthumb {
    margin-left: 216px;
    width: 227px;
    height: 14px;
    background: linear-gradient(#e4e4e4, #bdbdbd);
    border: 1px solid #a8a8a8;
    border-radius: 2px;
    display: flex;
    align-items: center;
    justify-content: center;
}

.hthumb b {
    width: 7px;
    height: 7px;
    border-left: 1px solid #666;
    border-right: 1px solid #666;
    background: linear-gradient(#666, #666) 50% 0 / 1px 100% no-repeat;
}

.st-end { flex: 1; }

/* ---- right side ---- */
.rightcol {
    width: 284px;
    flex: none;
    display: flex;
    flex-direction: column;
}

.strip-right {
    justify-content: space-between;
    padding: 0 4px 0 24px;
}

.rightbody {
    flex: 1;
    display: flex;
    min-height: 0;
}

.dock {
    width: 36px;
    flex: none;
}

.dock-box {
    background-color: #d6d6d6;
    display: flex;
    flex-direction: column;
    align-items: center;
    border-bottom: 1px solid #eee;
}

.dock-hist { height: 44px; margin-bottom: 1px; }
.dock-char { height: 73px; }

.grip-small {
    width: 28px;
    flex: none;
    height: 16px;
    margin: 0;
    background-position: 0 5px;
}

.dock-a {
    font-size: 19px;
    color: #555;
    border-right: 1px solid #222;
    padding-right: 1px;
    height: 18px;
    display: flex;
    align-items: center;
}

.dock-p {
    margin-top: 11px;
    font-size: 18px;
    font-weight: bold;
    line-height: 20px;
    color: #555;
}

.panels {
    width: 248px;
    flex: none;
    display: flex;
    flex-direction: column;
    border-right: 1px solid #555;
    background-color: #d6d6d6;
}

.panel-gap {
    height: 3px;
    flex: none;
    background-color: #333;
}

.tabs {
    height: 17px;
    flex: none;
    display: flex;
    align-items: stretch;
    background: linear-gradient(#6c6c6c, #8e8e8e);
    position: relative;
    border-bottom: 1px solid #777;
}

.tab {
    width: 35px;
    color: #333;
    background: #8c8c8c;
    border-right: 1px solid #666;
    text-align: center;
    line-height: 19px;
    font-size: 11.5px;
}

.tab.active {
    background: #d6d6d6;
    height: 17px;
    color: #555;
}

.panel-menu {
    position: absolute;
    right: 3px;
    top: 5px;
}

/* color panel */
.panel-color {
    height: 131px;
    flex: none;
}

.color-body {
    position: relative;
    padding: 8px 0 0 44px;
}

.cs {
    position: absolute;
    background-color: #000;
    border: 1px solid #fff;
    outline: 1px solid #333;
}

.cs-fg { left: 8px; top: 12px; width: 19px; height: 19px; }
.cs-bg { left: 21px; top: 25px; width: 18px; height: 18px; outline-color: #999; border-color: #000; }

.color-rows {
    display: grid;
    grid-template-columns: 15px 96px 40px;
    grid-auto-rows: 21px;
    row-gap: 5px;
    align-items: start;
}

.color-rows .value { margin-left: 5px; width: 35px; }

.ch-label {
    font-size: 10.5px;
    margin-top: 6px;
    line-height: 12px;
    color: #222;
}

.track {
    position: relative;
    height: 6px;
    margin-top: 8px;
    outline: 1px solid #999;
}

.track-r { background: linear-gradient(90deg, #000, #f00); }
.track-g { background: linear-gradient(90deg, #000, #0f0); }
.track-b { background: linear-gradient(90deg, #000, #00f); }

.thumb {
    position: absolute;
    left: -4px;
    top: 7px;
    border-left: 5px solid transparent;
    border-right: 5px solid transparent;
    border-bottom: 8px solid #3fa354;
}

.thumb::after {
    content: "";
    position: absolute;
    left: -3px;
    top: 3px;
    border-left: 3px solid transparent;
    border-right: 3px solid transparent;
    border-bottom: 4px solid #d7efd9;
}

.thumb-r { left: -3px; }

.value {
    height: 21px;
    background-color: #fff;
    border: 1px solid #ccc;
    padding-left: 3px;
    font-size: 10.5px;
    line-height: 16px;
}

.spectrum {
    position: relative;
    margin: 11px 0 0 -36px;
    width: 198px;
    height: 15px;
    outline: 1px solid #aaa;
    background:
        linear-gradient(180deg, rgba(255, 255, 255, .85), rgba(255, 255, 255, 0) 35%, rgba(0, 0, 0, 0) 35%, rgba(0, 0, 0, .9) 85%),
        linear-gradient(90deg, #f00 0, #ff0 15%, #0f0 30%, #0ff 47%, #00f 65%, #f0f 80%, #f00 96%);
}

.spec-end {
    position: absolute;
    right: 0;
    top: 0;
    width: 8px;
    height: 100%;
    background: linear-gradient(#fff 50%, #000 50%);
}

/* masks panel */
.panel-mask {
    height: 250px;
    flex: none;
}

.mask-body {
    padding: 0 0 0 4px;
}

.mask-head {
    height: 40px;
    margin-right: 37px;
    padding-top: 7px;
    display: flex;
    align-items: flex-start;
    border-bottom: 1px solid #999;
}

.mask-thumb {
    width: 32px;
    height: 24px;
    background-color: #000;
}

.mask-name {
    margin: 3px 0 0 5px;
    width: 125px;
    font-size: 12px;
    color: #111;
    transform: skewX(-12deg);
}

.mask-ic1 { margin-top: 4px; }
.mask-ic2 { margin: 4px 0 0 11px; }

.mask-row {
    display: flex;
    justify-content: space-between;
    margin: 7px 37px 0 0;
    height: 22px;
    align-items: center;
}

.mask-head + .mask-row { margin-top: 5px; }

.dim {
    color: #a8a8a8;
    text-shadow: 1px 1px 0 #f4f4f4;
    font-size: 12px;
    white-space: nowrap;
}

.dim-input {
    width: 56px;
    height: 22px;
    border: 1px solid #aaa;
    box-shadow: inset 0 0 0 1px #eee;
}

.dim-track {
    margin: 7px 43px 0 6px;
    height: 4px;
    background: #eee;
    border: 1px solid #b0b0b0;
    border-bottom-color: #fff;
}

.mask-actions {
    margin-top: 12px;
    margin-right: 38px;
    height: 74px;
    display: flex;
    justify-content: space-between;
}

.mask-btns {
    display: flex;
    flex-direction: column;
    gap: 10px;
}

.mask-btn {
    width: 79px;
    height: 18px;
    background: #f2f2f2;
    border: 1px solid #aaa;
    border-radius: 2px;
    text-align: center;
    line-height: 17px;
    color: #888;
    font-size: 12px;
}

.mask-foot {
    margin: 9px 37px 0 0;
    height: 16px;
    border-top: 1px solid #999;
    display: flex;
    align-items: center;
    padding-left: 7px;
}

.mf2 { margin-left: 11px; }
.mf3 { margin-left: 11px; }
.mf4 { margin-left: 114px; }

/* layers panel */
.panel-layers {
    flex: 1;
    display: flex;
    flex-direction: column;
    min-height: 0;
}

.layer-top, .layer-lock {
    height: 27px;
    flex: none;
    display: flex;
    align-items: center;
    border-bottom: 1px solid #999;
    padding-left: 4px;
}

.layer-top { padding-top: 2px; }

.blend {
    width: 123px;
    height: 21px;
    background: #fff;
    border: 1px solid #bbb;
    padding-left: 5px;
    line-height: 19px;
    display: flex;
    justify-content: space-between;
    align-items: center;
    color: #444;
}

.blend-arrow {
    width: 18px;
    height: 19px;
    background: #d6d6d6;
    border-left: 1px solid #ccc;
    position: relative;
}

.blend-arrow::after {
    content: "";
    position: absolute;
    left: 5px;
    top: 8px;
    border-left: 4px solid transparent;
    border-right: 4px solid transparent;
    border-top: 4px solid #999;
}

.lb-op { margin-left: 3px; width: 54px; }

.dim-val {
    width: 42px;
    height: 20px;
    border: 1px solid #aaa;
    background: #d6d6d6;
    color: #777;
    font-size: 11px;
    line-height: 18px;
    padding-left: 3px;
}

.dim-step {
    width: 16px;
    height: 20px;
    background: #e6e6e6;
    border: 1px solid #bbb;
    display: flex;
    align-items: center;
    justify-content: center;
}

.layer-lock {
    height: 26px;
    gap: 5px;
    padding-left: 8px;
}

.lb-lock { width: 26px; margin-right: 3px; }

.lb-fill {
    margin-left: 41px;
    width: 26px;
    margin-right: -1px;
}

.layer-lock .dim-val { margin-right: -5px; }

.layer-area {
    flex: 1;
    display: flex;
    min-height: 0;
}

.layer-list {
    width: 230px;
    flex: none;
}

.layer {
    display: flex;
    align-items: center;
    background: linear-gradient(#999, #999) 24px 0 / 1px 100% no-repeat;
}

.layer-shape {
    height: 39px;
    border-bottom: 1px solid #999;
}

.layer-bg {
    height: 32px;
    border-bottom: 1px solid #999;
}

.eye-cell {
    margin-left: 5px;
    width: 15px;
    height: 16px;
    border: 1px solid #bbb;
    display: flex;
    align-items: center;
    justify-content: center;
    flex: none;
}

.thumb-fill {
    margin-left: 8px;
    width: 31px;
    height: 30px;
    border: 1px solid #000;
    background: #fff;
    display: flex;
    flex-direction: column;
}

.thumb-blue {
    height: 20px;
    background-color: #2a7fd2;
    flex: none;
}

.link-ic { margin-left: 3px; }

.thumb-mask {
    margin-left: 3px;
    width: 32px;
    height: 24px;
    background: #777;
    border: 1px solid #000;
    display: flex;
}

.layer-name {
    margin-left: 8px;
    color: #111;
}

.layer-sel {
    margin-left: 5px;
    flex: 1;
    height: 31px;
    background-color: #3399ff;
    display: flex;
    align-items: center;
    border-left: 1px solid #999;
}

.thumb-black {
    width: 35px;
    height: 28px;
    margin-left: 1px;
    background: #000;
    border: 1px solid #fff;
    outline: 1px solid #000;
}

.layer-name-bg {
    margin-left: 8px;
    color: #fff;
    font-size: 11.5px;
    transform: skewX(-12deg);
    width: 135px;
}

.layer-scroll {
    flex: 1;
    background-color: #f1f1f1;
    display: flex;
    flex-direction: column;
    align-items: center;
    justify-content: space-between;
    margin-right: 1px;
    padding-top: 4px;
}

.layer-foot {
    height: 19px;
    flex: none;
    border-top: 1px solid #999;
    display: flex;
    align-items: center;
    justify-content: flex-end;
    gap: 15px;
    padding-right: 24px;
}

.fx {
    font-family: "Liberation Serif", serif;
    font-style: italic;
    font-weight: bold;
    font-size: 13px;
    color: #666;
}

/* ---- taskbar ---- */
.taskbar {
    margin-top: 3px;
    margin-left: -3px;
    margin-right: -4px;
    height: 5px;
    flex: none;
    background: linear-gradient(#1f5f96, #3a84ba);
    display: flex;
    align-items: flex-start;
}

.orb {
    margin-left: 16px;
    width: 22px;
    height: 5px;
    border-radius: 11px 11px 0 0;
    background: #dfe9f2;
    border: 1px solid #3a5f80;
}

.dot-orange {
    margin-left: 172px;
    width: 6px;
    height: 5px;
    background: #e08a2e;
    border-radius: 3px 3px 0 0;
}

.task-btn {
    margin-left: 3px;
    width: 59px;
    height: 5px;
    background: #dbe6ee;
    border: 1px solid #7c99b0;
    border-bottom: none;
}

.task-1 { margin-left: 29px; }

/* ---- watermark ---- */
.watermark {
    position: absolute;
    left: 983px;
    top: 851px;
    width: 240px;
    color: rgba(255, 255, 255, .72);
    pointer-events: none;
}

.wm-top {
    display: flex;
    align-items: flex-end;
    height: 76px;
}

.wm-bai {
    margin-left: -3px;
    margin-bottom: -6px;
    width: 79px;
    flex: none;
    font-size: 54px;
    font-weight: bold;
    line-height: 60px;
    letter-spacing: -1px;
}

.wm-paw {
    flex: none;
    margin-left: 1px;
}

.wm-du {
    font-family: "Liberation Sans", sans-serif;
    font-size: 27px;
    font-weight: bold;
    fill: #bdbdbd;
}

.wm-cn {
    margin-bottom: -5px;
    margin-left: -2px;
    font-size: 38px;
    font-weight: bold;
    line-height: 58px;
    white-space: nowrap;
}

.wm-url {
    margin-top: 2px;
    font-size: 27px;
    line-height: 30px;
    letter-spacing: .3px;
    white-space: nowrap;
}
```
